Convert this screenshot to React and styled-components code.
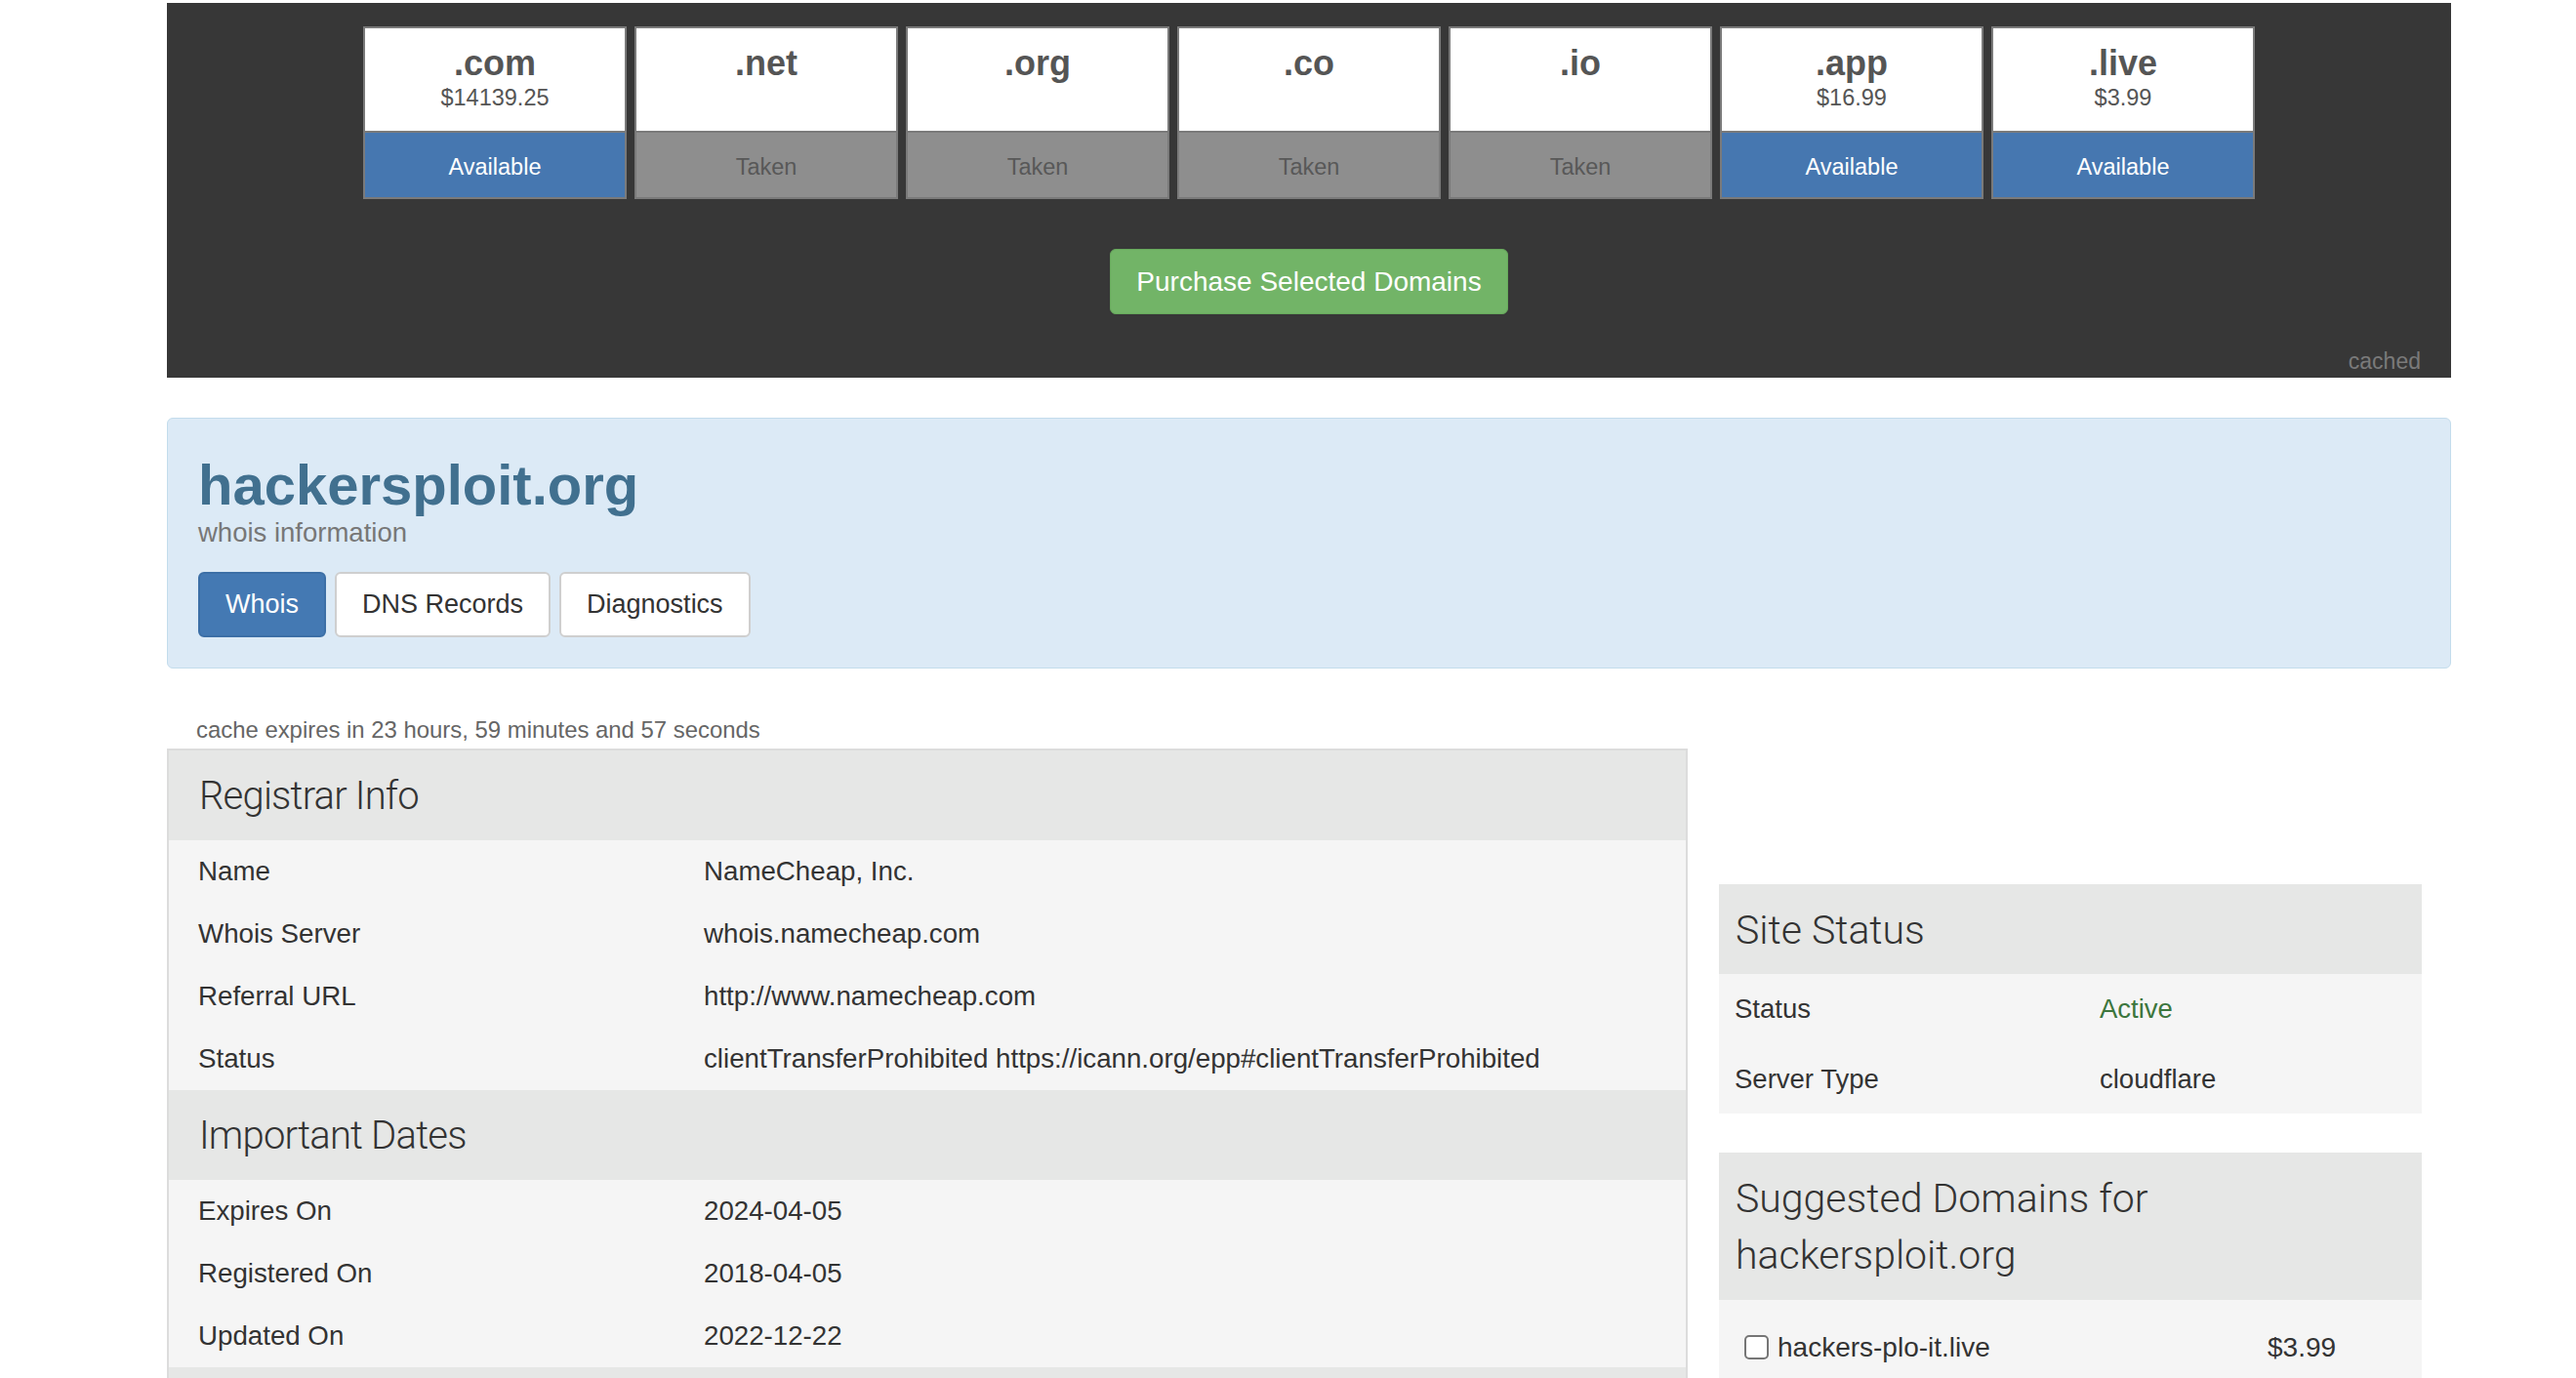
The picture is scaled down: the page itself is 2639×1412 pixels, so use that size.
import React from "react";
import styled, { createGlobalStyle } from "styled-components";

const GlobalStyle = createGlobalStyle`
  html, body {
    margin: 0;
    padding: 0;
    background: #fff;
  }
  body {
    font-family: "Liberation Sans", Arial, sans-serif;
    color: #333;
  }
  * {
    box-sizing: border-box;
  }
`;

const tlds = [
    { ext: ".com", price: "$14139.25", available: true },
    { ext: ".net" },
    { ext: ".org" },
    { ext: ".co" },
    { ext: ".io" },
    { ext: ".app", price: "$16.99", available: true },
    { ext: ".live", price: "$3.99", available: true },
];

const registrar = [
    ["Name", "NameCheap, Inc."],
    ["Whois Server", "whois.namecheap.com"],
    ["Referral URL", "http://www.namecheap.com"],
    ["Status", "clientTransferProhibited https://icann.org/epp#clientTransferProhibited"],
];

const dates = [
    ["Expires On", "2024-04-05"],
    ["Registered On", "2018-04-05"],
    ["Updated On", "2022-12-22"],
];

const App = () => {
    return (
        <>
            <GlobalStyle />
            <Page>
                <DomainBar>
                    <TileRow>
                        {tlds.map((t) => (
                            <Tile key={t.ext}>
                                <TileTop>
                                    <Ext>{t.ext}</Ext>
                                    {t.price && <Price>{t.price}</Price>}
                                </TileTop>
                                <TileStatus available={t.available}>
                                    {t.available ? "Available" : "Taken"}
                                </TileStatus>
                            </Tile>
                        ))}
                    </TileRow>
                    <PurchaseRow>
                        <PurchaseButton type="button">Purchase Selected Domains</PurchaseButton>
                    </PurchaseRow>
                    <Cached>cached</Cached>
                </DomainBar>

                <InfoPanel>
                    <DomainTitle>hackersploit.org</DomainTitle>
                    <Subtitle>whois information</Subtitle>
                    <TabRow>
                        <Tab active>Whois</Tab>
                        <Tab>DNS Records</Tab>
                        <Tab>Diagnostics</Tab>
                    </TabRow>
                </InfoPanel>

                <Main>
                    <LeftCol>
                        <CacheNote>cache expires in 23 hours, 59 minutes and 57 seconds</CacheNote>
                        <DataPanel>
                            <SectionHeader>Registrar Info</SectionHeader>
                            {registrar.map(([k, v]) => (
                                <DataRow key={k}>
                                    <span>{k}</span>
                                    <span>{v}</span>
                                </DataRow>
                            ))}
                            <SectionHeader>Important Dates</SectionHeader>
                            {dates.map(([k, v]) => (
                                <DataRow key={k}>
                                    <span>{k}</span>
                                    <span>{v}</span>
                                </DataRow>
                            ))}
                            {/* next section starts just below the fold */}
                            <SectionBar />
                        </DataPanel>
                    </LeftCol>

                    <RightCol>
                        <SidePanel>
                            <SideHeader>Site Status</SideHeader>
                            <SideRow>
                                <span>Status</span>
                                <StatusValue>Active</StatusValue>
                            </SideRow>
                            <SideRow>
                                <span>Server Type</span>
                                <span>cloudflare</span>
                            </SideRow>
                        </SidePanel>
                        <SidePanel>
                            <SideHeader>Suggested Domains for hackersploit.org</SideHeader>
                            <Suggestion>
                                <label>
                                    <Check type="checkbox" />
                                    hackers-plo-it.live
                                </label>
                                <span>$3.99</span>
                            </Suggestion>
                        </SidePanel>
                    </RightCol>
                </Main>
            </Page>
        </>
    );
};

export default App;

const Page = styled.div`
    width: 2340px;
    margin-left: 171px;
    padding-top: 3px;
`;

const DomainBar = styled.div`
    background-color: #373737;
    padding: 24px 31px 5px;
`;

const TileRow = styled.div`
    display: flex;
    justify-content: center;
    gap: 8px;
`;

const Tile = styled.div`
    width: 270px;
    border: 2px solid #7a7a7a;
    display: flex;
    flex-direction: column;
`;

const TileTop = styled.div`
    height: 105px;
    background: #fff;
    padding-top: 16px;
    text-align: center;
    color: #555;
`;

const Ext = styled.div`
    font-size: 36px;
    font-weight: bold;
    line-height: 40px;
`;

const Price = styled.div`
    font-size: 23.5px;
    line-height: 30px;
`;

const TileStatus = styled.div`
    height: 68px;
    padding-top: 4px;
    border-top: 2px solid #7a7a7a;
    background: ${(p) => (p.available ? "#4677b0" : "#8e8e8e")};
    color: ${(p) => (p.available ? "#fff" : "#585858")};
    font-size: 23.5px;
    display: flex;
    align-items: center;
    justify-content: center;
`;

const PurchaseRow = styled.div`
    display: flex;
    justify-content: center;
    margin-top: 51px;
`;

const PurchaseButton = styled.button`
    height: 67px;
    padding: 0 26px;
    font-family: "Liberation Sans", Arial, sans-serif;
    font-size: 28px;
    color: #fff;
    background: #72b467;
    border: 1px solid #67a95c;
    border-radius: 6px;
`;

const Cached = styled.div`
    text-align: right;
    font-size: 23px;
    line-height: 23px;
    color: #7a7a7a;
    margin-top: 37px;
`;

const InfoPanel = styled.div`
    margin-top: 41px;
    background: #dceaf6;
    border: 1px solid #c3dcec;
    border-radius: 6px;
    padding: 36px 31px 31px;
`;

const DomainTitle = styled.h1`
    margin: 0;
    font-size: 58px;
    line-height: 64px;
    font-weight: bold;
    color: #41708f;
`;

const Subtitle = styled.div`
    margin-top: 2px;
    font-size: 27.5px;
    line-height: 30px;
    color: #777;
`;

const TabRow = styled.div`
    display: flex;
    gap: 9px;
    margin-top: 25px;
`;

const Tab = styled.button`
    height: 67px;
    padding: 0 26px;
    font-family: "Liberation Sans", Arial, sans-serif;
    font-size: 27px;
    border-radius: 6px;
    border: 2px solid ${(p) => (p.active ? "#3c6fa6" : "#cfcfcf")};
    background: ${(p) => (p.active ? "#4479b3" : "#fff")};
    color: ${(p) => (p.active ? "#fff" : "#333")};
`;

const Main = styled.div`
    display: grid;
    grid-template-columns: 1558px 1fr;
    align-items: start;
`;

const LeftCol = styled.div`
    padding-top: 46px;
`;

const CacheNote = styled.div`
    padding-left: 30px;
    font-size: 23.9px;
    line-height: 33px;
    color: #666;
    margin-bottom: 3px;
`;

const DataPanel = styled.div`
    border: 2px solid #dcdcdc;
    background: #f5f5f5;
`;

const SectionHeader = styled.div`
    background: #e6e7e6;
    padding: 17.5px 31px 15.8px;
    font-family: Roboto, "Liberation Sans", sans-serif;
    font-weight: 300;
    font-size: 40px;
    letter-spacing: -0.8px;
    line-height: 58.7px;
    color: #333;
`;

const SectionBar = styled.div`
    height: 92px;
    background: #e6e7e6;
`;

const DataRow = styled.div`
    display: grid;
    grid-template-columns: 1fr 2fr;
    font-size: 27.7px;
    line-height: 38px;
    span {
        padding: 13px 30px;
    }
`;

const RightCol = styled.div`
    padding: 221px 30px 0 32px;
    display: flex;
    flex-direction: column;
    gap: 40px;
`;

const SidePanel = styled.div`
    background: #f5f5f5;
`;

const SideHeader = styled(SectionHeader)`
    padding-left: 17px;
    padding-right: 17px;
    font-size: 41px;
    letter-spacing: 0;
`;

const SideRow = styled.div`
    display: grid;
    grid-template-columns: 374px 1fr;
    font-size: 27.5px;
    line-height: 38px;
    span {
        padding: 17px 16px 16.5px;
    }
`;

const StatusValue = styled.span`
    color: #3c763d;
`;

const Suggestion = styled.div`
    display: grid;
    grid-template-columns: 536px 1fr;
    padding: 30px 0 20px 26px;
    font-size: 28px;
    line-height: 38px;
    label {
        display: flex;
        align-items: center;
        gap: 9px;
    }
`;

const Check = styled.input`
    appearance: none;
    width: 25px;
    height: 25px;
    margin: 0;
    border: 2px solid #767676;
    border-radius: 5px;
    background: #fff;
`;
